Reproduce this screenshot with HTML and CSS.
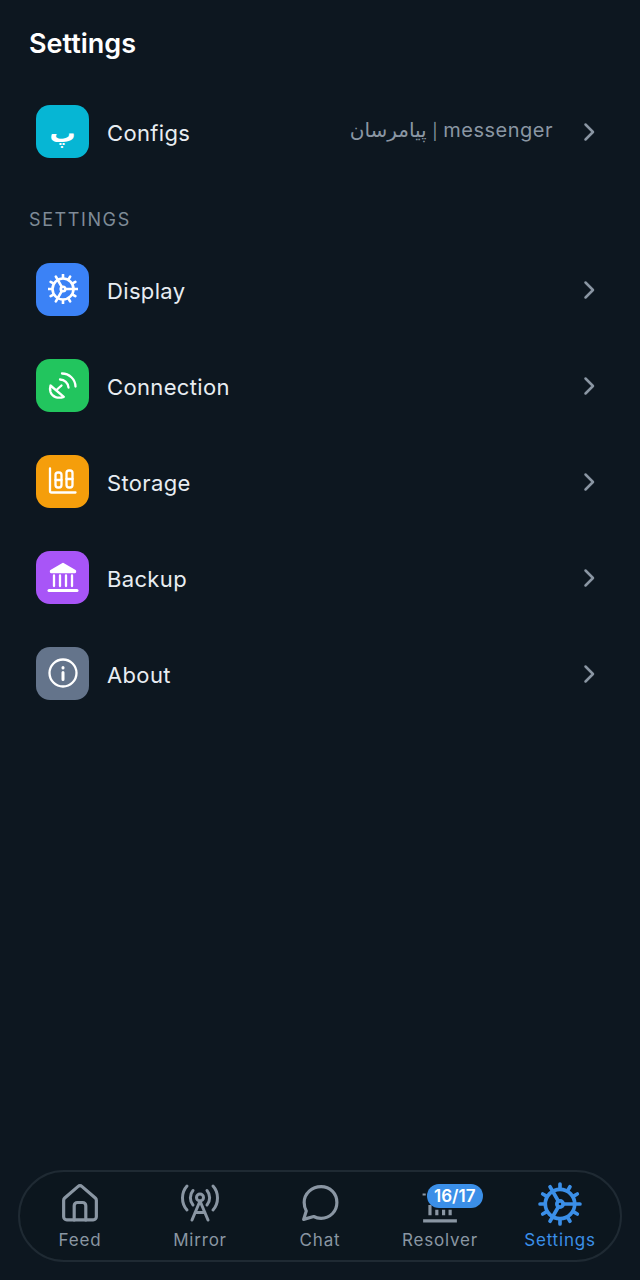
FILE: index.html
```html
<!DOCTYPE html>
<html lang="en">

<head>
    <meta charset="UTF-8">
    <meta name="viewport" content="width=device-width, initial-scale=1.0">
    <title>Settings</title>
    <link rel="stylesheet" href="styles.css">
</head>

<body>
    <main class="page">
        <h1 class="title">Settings</h1>

        <a class="row">
            <span class="tile tile-cyan"><span class="tile-letter" lang="fa">پ</span></span>
            <span class="row-label">Configs</span>
            <span class="row-value" dir="ltr"><span lang="fa">پیامرسان</span> <span class="row-sep">|</span> messenger</span>
            <svg class="chevron" viewBox="0 0 24 24"><path d="M8.500 4.500 16 12l-7.500 7.500"/></svg>
        </a>

        <h2 class="section">SETTINGS</h2>

        <a class="row">
            <span class="tile tile-blue">
                <svg class="tile-icon gear" viewBox="0 0 40 40">
                    <circle cx="20" cy="20" r="14"/>
                    <circle cx="20" cy="20" r="3"/>
                    <path d="M23 20H34M18.500 17.400 13 7.900M18.500 22.600 13 32.100"/>
                    <path d="M35.500 20H39M33.400 12.250 36.450 10.500M27.750 6.600 29.500 3.550M20 4.500V1M12.250 6.600 10.500 3.550M6.600 12.250 3.550 10.500M4.500 20H1M6.600 27.750 3.550 29.500M12.250 33.400 10.500 36.450M20 35.500V39M27.750 33.400 29.500 36.450M33.400 27.750 36.450 29.500"/>
                </svg>
            </span>
            <span class="row-label">Display</span>
            <svg class="chevron" viewBox="0 0 24 24"><path d="M8.500 4.500 16 12l-7.500 7.500"/></svg>
        </a>

        <a class="row">
            <span class="tile tile-green">
                <svg class="tile-icon" viewBox="0 0 32 32">
                    <path d="M3.500 16.500 16.800 27.800C11 30 5 28 3.500 23 3 21 3 18 3.500 16.500Z"/>
                    <path d="M10 20.500 14.500 16.500"/>
                    <path d="M13 10.500A8.500 8.500 0 0 1 21.500 18.500M15 4.500A13.500 13.500 0 0 1 28.500 17.500"/>
                </svg>
            </span>
            <span class="row-label">Connection</span>
            <svg class="chevron" viewBox="0 0 24 24"><path d="M8.500 4.500 16 12l-7.500 7.500"/></svg>
        </a>

        <a class="row">
            <span class="tile tile-orange">
                <svg class="tile-icon" viewBox="0 0 32 32">
                    <path d="M3 3.500V26a1.500 1.500 0 0 0 1.500 1.500h24"/>
                    <rect x="8.500" y="7.500" width="6" height="15" rx="2.500"/>
                    <rect x="19.500" y="5.500" width="6" height="17" rx="2.500"/>
                    <path d="M8.500 15h6M19.500 14h6"/>
                </svg>
            </span>
            <span class="row-label">Storage</span>
            <svg class="chevron" viewBox="0 0 24 24"><path d="M8.500 4.500 16 12l-7.500 7.500"/></svg>
        </a>

        <a class="row">
            <span class="tile tile-purple">
                <svg class="tile-icon" viewBox="0 0 32 32">
                    <path class="solid" d="M4 10 16 3l12 7v1H4Z"/>
                    <path d="M7 14.500V25M13 14.500V25M19 14.500V25M25 14.500V25"/>
                    <path class="thick" d="M2 29.500h28"/>
                </svg>
            </span>
            <span class="row-label">Backup</span>
            <svg class="chevron" viewBox="0 0 24 24"><path d="M8.500 4.500 16 12l-7.500 7.500"/></svg>
        </a>

        <a class="row">
            <span class="tile tile-slate">
                <svg class="tile-icon" viewBox="0 0 32 32">
                    <circle cx="16" cy="16" r="13.500"/>
                    <path class="thick" d="M16 15.500v7M16 10.500v.5"/>
                </svg>
            </span>
            <span class="row-label">About</span>
            <svg class="chevron" viewBox="0 0 24 24"><path d="M8.500 4.500 16 12l-7.500 7.500"/></svg>
        </a>
    </main>

    <nav class="tabbar">
        <a class="tab">
            <svg class="tab-icon" viewBox="0 0 36 36">
                <path d="M2.500 15.500a3 3 0 0 1 1-2.200L16 2.500a3 3 0 0 1 4 0l12.500 10.800a3 3 0 0 1 1 2.200V31a3 3 0 0 1-3 3H5.500a3 3 0 0 1-3-3Z"/>
                <path d="M12.500 34V20.500a3 3 0 0 1 3-3h5a3 3 0 0 1 3 3V34"/>
            </svg>
            <span>Feed</span>
        </a>
        <a class="tab">
            <svg class="tab-icon" viewBox="0 0 40 36">
                <circle cx="20" cy="12.500" r="3.500"/>
                <path d="M20 16 12 35M20 16l8 19M15 27.500h10"/>
                <path d="M13 5.500c-3.500 4-3.500 10.500 0 14.500M27 5.500c3.500 4 3.500 10.500 0 14.500"/>
                <path d="M7 1c-6 6.500-6 17.500 0 24M33 1c6 6.500 6 17.500 0 24"/>
            </svg>
            <span>Mirror</span>
        </a>
        <a class="tab">
            <svg class="tab-icon" viewBox="0 0 36 36">
                <path d="M19 2.500c8.500 0 15 6.500 15 15s-6.500 15-15 15c-2.600 0-5-.6-7-1.700L2.500 33.500 5 25.500c-1.300-2.300-2-5-2-8C3 9 10.500 2.500 19 2.500Z"/>
            </svg>
            <span>Chat</span>
        </a>
        <a class="tab">
            <span class="badge">16/17</span>
            <svg class="tab-icon flat" viewBox="0 0 36 36">
                <path d="M3 9v2M8.500 20v9.500M15 24.500v5M21.400 24.500v5M27.600 24.500v5"/>
                <path d="M2 35h32"/>
            </svg>
            <span>Resolver</span>
        </a>
        <a class="tab tab-active">
            <svg class="tab-icon gear" viewBox="0 0 40 40">
                <circle cx="20" cy="20" r="14"/>
                <circle cx="20" cy="20" r="3"/>
                <path d="M23 20H34M18.500 17.400 13 7.900M18.500 22.600 13 32.100"/>
                <path d="M35.500 20H39M33.400 12.250 36.450 10.500M27.750 6.600 29.500 3.550M20 4.500V1M12.250 6.600 10.500 3.550M6.600 12.250 3.550 10.500M4.500 20H1M6.600 27.750 3.550 29.500M12.250 33.400 10.500 36.450M20 35.500V39M27.750 33.400 29.500 36.450M33.400 27.750 36.450 29.500"/>
            </svg>
            <span>Settings</span>
        </a>
    </nav>
</body>

</html>
```

FILE: styles.css
```css
* {
    box-sizing: border-box;
}

body {
    margin: 0;
    height: 1280px;
    overflow: hidden;
    display: flex;
    flex-direction: column;
    background-color: #0d1720;
    color: #e8edf2;
    font-family: Inter, "Noto Sans", "DejaVu Sans", sans-serif;
}

.page {
    flex: 1;
    padding: 28px 0 0 29px;
}

.title {
    margin: 0 0 23px;
    font-size: 27px;
    line-height: 32px;
    font-weight: 600;
    color: #fff;
}

.section {
    margin: 29px 0 9px;
    font-size: 18px;
    line-height: 24px;
    font-weight: 400;
    letter-spacing: 1.6px;
    color: #7f8b97;
}

.row {
    display: flex;
    align-items: center;
    height: 96px;
    padding: 0 39px 0 7px;
}

.row-label {
    flex: 1;
    margin-left: 18px;
    padding-top: 4px;
    font-size: 22px;
    letter-spacing: .35px;
    color: #e8edf2;
}

.row-value {
    margin: 0 24px 2px 0;
    font-size: 20px;
    letter-spacing: .5px;
    color: #8a96a3;
    font-family: Inter, "DejaVu Sans", sans-serif;
}

.row-sep {
    font-size: 16px;
}

.chevron {
    width: 24px;
    height: 24px;
    margin-top: 2px;
    fill: none;
    stroke: #8a96a3;
    stroke-width: 2.500;
    stroke-linecap: round;
    stroke-linejoin: round;
}

.tile {
    width: 53px;
    height: 53px;
    border-radius: 14px;
    display: flex;
    align-items: center;
    justify-content: center;
    flex-shrink: 0;
}

.tile-cyan { background-color: #06b6d4; }
.tile-blue { background-color: #3b82f6; }
.tile-green { background-color: #22c55e; }
.tile-orange { background-color: #f59e0b; }
.tile-purple { background-color: #a855f7; }
.tile-slate { background-color: #64748b; }

.tile-letter {
    margin-top: 4px;
    color: #fff;
    font-size: 26px;
    font-weight: 700;
    line-height: 1;
    font-family: "DejaVu Sans", sans-serif;
}

.tile-icon {
    width: 32px;
    height: 32px;
    fill: none;
    stroke: #fff;
    stroke-width: 2.300;
    stroke-linecap: round;
    stroke-linejoin: round;
}

.tile-icon.gear {
    width: 30px;
    height: 30px;
    stroke-width: 3.500;
}

.tile-icon .thick {
    stroke-width: 3;
}

.tile-icon .solid {
    fill: #fff;
}

.tabbar {
    display: flex;
    height: 92px;
    margin: 0 18px 18px;
    border: 2px solid #1f2a33;
    border-radius: 46px;
    background-color: #0c161e;
}

.tab {
    flex: 1;
    position: relative;
    display: flex;
    flex-direction: column;
    align-items: center;
    justify-content: flex-end;
    padding-bottom: 9px;
    font-size: 17px;
    line-height: 22px;
    letter-spacing: .8px;
    color: #8a96a3;
}

.tab-icon {
    width: 40px;
    height: 38px;
    margin-bottom: 7px;
    overflow: visible;
    fill: none;
    stroke: #8a96a3;
    stroke-width: 3;
    stroke-linecap: round;
    stroke-linejoin: round;
}

.tab-icon.flat {
    stroke-linecap: butt;
}

.tab-active {
    color: #3b8fe8;
}

.tab-active .tab-icon {
    width: 42px;
    height: 42px;
    margin-bottom: 4px;
    stroke: #3b8fe8;
    stroke-width: 3.500;
}

.badge {
    position: absolute;
    top: 12px;
    left: 50%;
    margin-left: -13px;
    padding: 0 7px;
    height: 24px;
    border-radius: 12px;
    background-color: #3b8fe8;
    color: #fff;
    font-size: 17px;
    line-height: 24px;
    font-weight: 600;
    letter-spacing: 0;
}
```
